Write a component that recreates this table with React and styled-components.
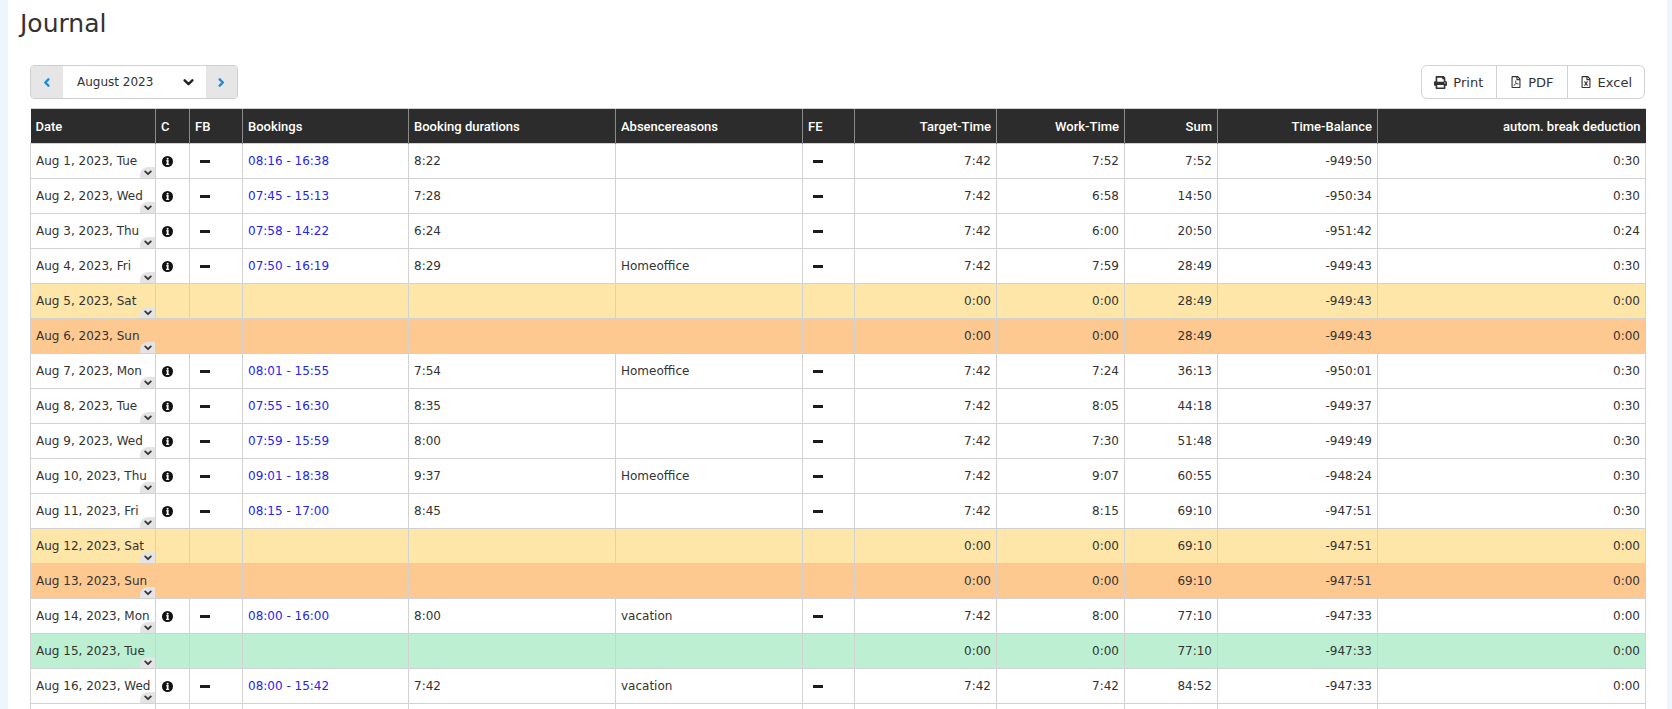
import React from "react";
import styled, { createGlobalStyle } from "styled-components";
import { FaPrint, FaRegFilePdf, FaRegFileExcel } from "react-icons/fa";

const GlobalStyle = createGlobalStyle`
  html, body {
    margin: 0;
    padding: 0;
    background: #edf5fd;
    overflow: hidden;
  }
  body {
    font-family: "DejaVu Sans", Verdana, sans-serif;
    color: #333;
  }
`;

const rows = [
  { date: "Aug 1, 2023, Tue", kind: "work", book: "08:16 - 16:38", dur: "8:22", abs: "", target: "7:42", work: "7:52", sum: "7:52", bal: "-949:50", brk: "0:30" },
  { date: "Aug 2, 2023, Wed", kind: "work", book: "07:45 - 15:13", dur: "7:28", abs: "", target: "7:42", work: "6:58", sum: "14:50", bal: "-950:34", brk: "0:30" },
  { date: "Aug 3, 2023, Thu", kind: "work", book: "07:58 - 14:22", dur: "6:24", abs: "", target: "7:42", work: "6:00", sum: "20:50", bal: "-951:42", brk: "0:24" },
  { date: "Aug 4, 2023, Fri", kind: "work", book: "07:50 - 16:19", dur: "8:29", abs: "Homeoffice", target: "7:42", work: "7:59", sum: "28:49", bal: "-949:43", brk: "0:30" },
  { date: "Aug 5, 2023, Sat", kind: "sat", target: "0:00", work: "0:00", sum: "28:49", bal: "-949:43", brk: "0:00" },
  { date: "Aug 6, 2023, Sun", kind: "sun", target: "0:00", work: "0:00", sum: "28:49", bal: "-949:43", brk: "0:00" },
  { date: "Aug 7, 2023, Mon", kind: "work", book: "08:01 - 15:55", dur: "7:54", abs: "Homeoffice", target: "7:42", work: "7:24", sum: "36:13", bal: "-950:01", brk: "0:30" },
  { date: "Aug 8, 2023, Tue", kind: "work", book: "07:55 - 16:30", dur: "8:35", abs: "", target: "7:42", work: "8:05", sum: "44:18", bal: "-949:37", brk: "0:30" },
  { date: "Aug 9, 2023, Wed", kind: "work", book: "07:59 - 15:59", dur: "8:00", abs: "", target: "7:42", work: "7:30", sum: "51:48", bal: "-949:49", brk: "0:30" },
  { date: "Aug 10, 2023, Thu", kind: "work", book: "09:01 - 18:38", dur: "9:37", abs: "Homeoffice", target: "7:42", work: "9:07", sum: "60:55", bal: "-948:24", brk: "0:30" },
  { date: "Aug 11, 2023, Fri", kind: "work", book: "08:15 - 17:00", dur: "8:45", abs: "", target: "7:42", work: "8:15", sum: "69:10", bal: "-947:51", brk: "0:30" },
  { date: "Aug 12, 2023, Sat", kind: "sat", target: "0:00", work: "0:00", sum: "69:10", bal: "-947:51", brk: "0:00" },
  { date: "Aug 13, 2023, Sun", kind: "sun", target: "0:00", work: "0:00", sum: "69:10", bal: "-947:51", brk: "0:00" },
  { date: "Aug 14, 2023, Mon", kind: "work", book: "08:00 - 16:00", dur: "8:00", abs: "vacation", target: "7:42", work: "8:00", sum: "77:10", bal: "-947:33", brk: "0:00" },
  { date: "Aug 15, 2023, Tue", kind: "holiday", target: "0:00", work: "0:00", sum: "77:10", bal: "-947:33", brk: "0:00" },
  { date: "Aug 16, 2023, Wed", kind: "work", book: "08:00 - 15:42", dur: "7:42", abs: "vacation", target: "7:42", work: "7:42", sum: "84:52", bal: "-947:33", brk: "0:00" },
];

const columns = [
  { label: "Date", width: 125 },
  { label: "C", width: 34 },
  { label: "FB", width: 53 },
  { label: "Bookings", width: 166 },
  { label: "Booking durations", width: 207 },
  { label: "Absencereasons", width: 187 },
  { label: "FE", width: 52 },
  { label: "Target-Time", width: 142, right: true },
  { label: "Work-Time", width: 128, right: true },
  { label: "Sum", width: 93, right: true },
  { label: "Time-Balance", width: 160, right: true },
  { label: "autom. break deduction", width: 268, right: true },
];

const rowColors = {
  work: "#ffffff",
  sat: "#fee5a8",
  sun: "#fec891",
  holiday: "#bdf0d2",
};

const Card = styled.div`
  margin: 0 5px 0 8px;
  min-height: 100vh;
  background: #fff;
  padding-top: 9px;
`;

const Title = styled.h1`
  margin: 0;
  padding-left: 12px;
  font-size: 25px;
  line-height: 29px;
  font-weight: normal;
  color: #333;
`;

const Content = styled.div`
  padding: 0 22px;
`;

const Toolbar = styled.div`
  display: flex;
  justify-content: space-between;
  align-items: center;
  margin-top: 27px;
`;

const NavGroup = styled.div`
  display: flex;
  height: 34px;
  box-sizing: border-box;
  border: 1px solid #cfcfcf;
  border-radius: 4px;
  overflow: hidden;
`;

const NavButton = styled.div`
  width: ${({ w }) => w}px;
  display: flex;
  align-items: center;
  justify-content: center;
  background: #e6e6e6;
`;

const MonthSelect = styled.div`
  width: 143px;
  box-sizing: border-box;
  display: flex;
  align-items: center;
  justify-content: space-between;
  padding: 0 12px 0 14px;
  background: #fff;
  font-size: 12px;
  color: #333;
`;

const ExportGroup = styled.div`
  display: flex;
  height: 34px;
  box-sizing: border-box;
  border: 1px solid #d2d2d2;
  border-radius: 6px;
  overflow: hidden;
`;

const ExportButton = styled.div`
  display: flex;
  align-items: center;
  gap: 6px;
  padding: 0 ${({ pr }) => pr}px 0 ${({ pl }) => pl}px;
  font-size: 13px;
  color: #333;
  & + & {
    border-left: 1px solid #d2d2d2;
  }
  svg {
    color: #333;
  }
`;

const Table = styled.table`
  margin-top: 9px;
  width: 1615px;
  border-collapse: collapse;
  table-layout: fixed;
`;

const HeadCell = styled.th`
  height: 34px;
  padding: 0 5px;
  background: #2c2c2c;
  color: #fff;
  font-family: Roboto, "Noto Sans", sans-serif;
  font-weight: 500;
  font-size: 13px;
  text-align: ${({ right }) => (right ? "right" : "left")};
  border-left: 1px solid #8a8a8a;
  border-top: 1px solid #d0d0d0;
  white-space: nowrap;
  &:first-child {
    border-left: none;
  }
`;

const Row = styled.tr`
  background: ${({ kind }) => rowColors[kind]};
`;

const Cell = styled.td`
  height: 34px;
  padding: 0 5px;
  font-size: 12px;
  color: ${({ blue }) => (blue ? "#2424f0" : "#333")};
  text-align: ${({ right }) => (right ? "right" : "left")};
  border: 1px solid #d2d2d2;
  white-space: nowrap;
  overflow: visible;
`;

const DateCell = styled(Cell)`
  position: relative;
  overflow: hidden;
`;

const Expander = styled.span`
  position: absolute;
  right: 0;
  bottom: 0;
  width: 15px;
  height: 11px;
  background: #e4e4e4;
  border-top-left-radius: 8px;
  display: flex;
  align-items: center;
  justify-content: center;
`;

const Dash = styled.span`
  display: inline-block;
  width: 10px;
  height: 3px;
  margin-left: 5px;
  vertical-align: middle;
  background: #1c1c1c;
`;

const InfoWrap = styled.span`
  display: inline-flex;
  margin-left: 1px;
  vertical-align: middle;
`;

const Chevron = ({ dir, size = 9, color = "#1a8fd8", sw = 2.6 }) => {
  const pts = {
    left: "6,1.5 2.5,5 6,8.5",
    right: "3,1.5 6.5,5 3,8.5",
    down: "1.5,3 5,6.5 8.5,3",
  }[dir];
  return (
    <svg width={size} height={size} viewBox="0 0 10 10">
      <polyline points={pts} fill="none" stroke={color} strokeWidth={sw} strokeLinecap="round" strokeLinejoin="round" />
    </svg>
  );
};

const InfoIcon = () => (
  <InfoWrap>
    <svg width="11" height="11" viewBox="0 0 11 11">
      <circle cx="5.5" cy="5.5" r="5.5" fill="#111" />
      <circle cx="5.6" cy="2.8" r="1.05" fill="#fff" />
      <rect x="4.1" y="4.3" width="2.5" height="1" fill="#fff" />
      <rect x="4.8" y="4.3" width="1.7" height="4.1" fill="#fff" />
      <rect x="4" y="7.8" width="3.2" height="1.1" fill="#fff" />
    </svg>
  </InfoWrap>
);

const App = () => {
  return (
    <>
      <GlobalStyle />
      <Card>
        <Title>Journal</Title>
        <Content>
          <Toolbar>
            <NavGroup>
              <NavButton w={32}>
                <Chevron dir="left" />
              </NavButton>
              <MonthSelect>
                <span>August 2023</span>
                <Chevron dir="down" size={11} color="#222" sw={2.2} />
              </MonthSelect>
              <NavButton w={31}>
                <Chevron dir="right" />
              </NavButton>
            </NavGroup>
            <ExportGroup>
              <ExportButton pl={12} pr={13}>
                <FaPrint size={13} />
                <span>Print</span>
              </ExportButton>
              <ExportButton pl={13} pr={13}>
                <FaRegFilePdf size={12} />
                <span>PDF</span>
              </ExportButton>
              <ExportButton pl={12} pr={12}>
                <FaRegFileExcel size={12} />
                <span>Excel</span>
              </ExportButton>
            </ExportGroup>
          </Toolbar>

          <Table>
            <colgroup>
              {columns.map((c) => (
                <col key={c.label} style={{ width: c.width }} />
              ))}
            </colgroup>
            <thead>
              <tr>
                {columns.map((c) => (
                  <HeadCell key={c.label} right={c.right}>
                    {c.label}
                  </HeadCell>
                ))}
              </tr>
            </thead>
            <tbody>
              {rows.map((r) => {
                const isWork = r.kind === "work";
                return (
                  <Row key={r.date} kind={r.kind}>
                    <DateCell>
                      {r.date}
                      <Expander>
                        <Chevron dir="down" size={8} color="#333" sw={2.2} />
                      </Expander>
                    </DateCell>
                    <Cell>{isWork && <InfoIcon />}</Cell>
                    <Cell>{isWork && <Dash />}</Cell>
                    <Cell blue>{r.book}</Cell>
                    <Cell>{r.dur}</Cell>
                    <Cell>{r.abs}</Cell>
                    <Cell>{isWork && <Dash />}</Cell>
                    <Cell right>{r.target}</Cell>
                    <Cell right>{r.work}</Cell>
                    <Cell right>{r.sum}</Cell>
                    <Cell right>{r.bal}</Cell>
                    <Cell right>{r.brk}</Cell>
                  </Row>
                );
              })}
              <Row kind="work">
                {columns.map((c) => (
                  <Cell key={c.label} />
                ))}
              </Row>
            </tbody>
          </Table>
        </Content>
      </Card>
    </>
  );
};

export default App;
